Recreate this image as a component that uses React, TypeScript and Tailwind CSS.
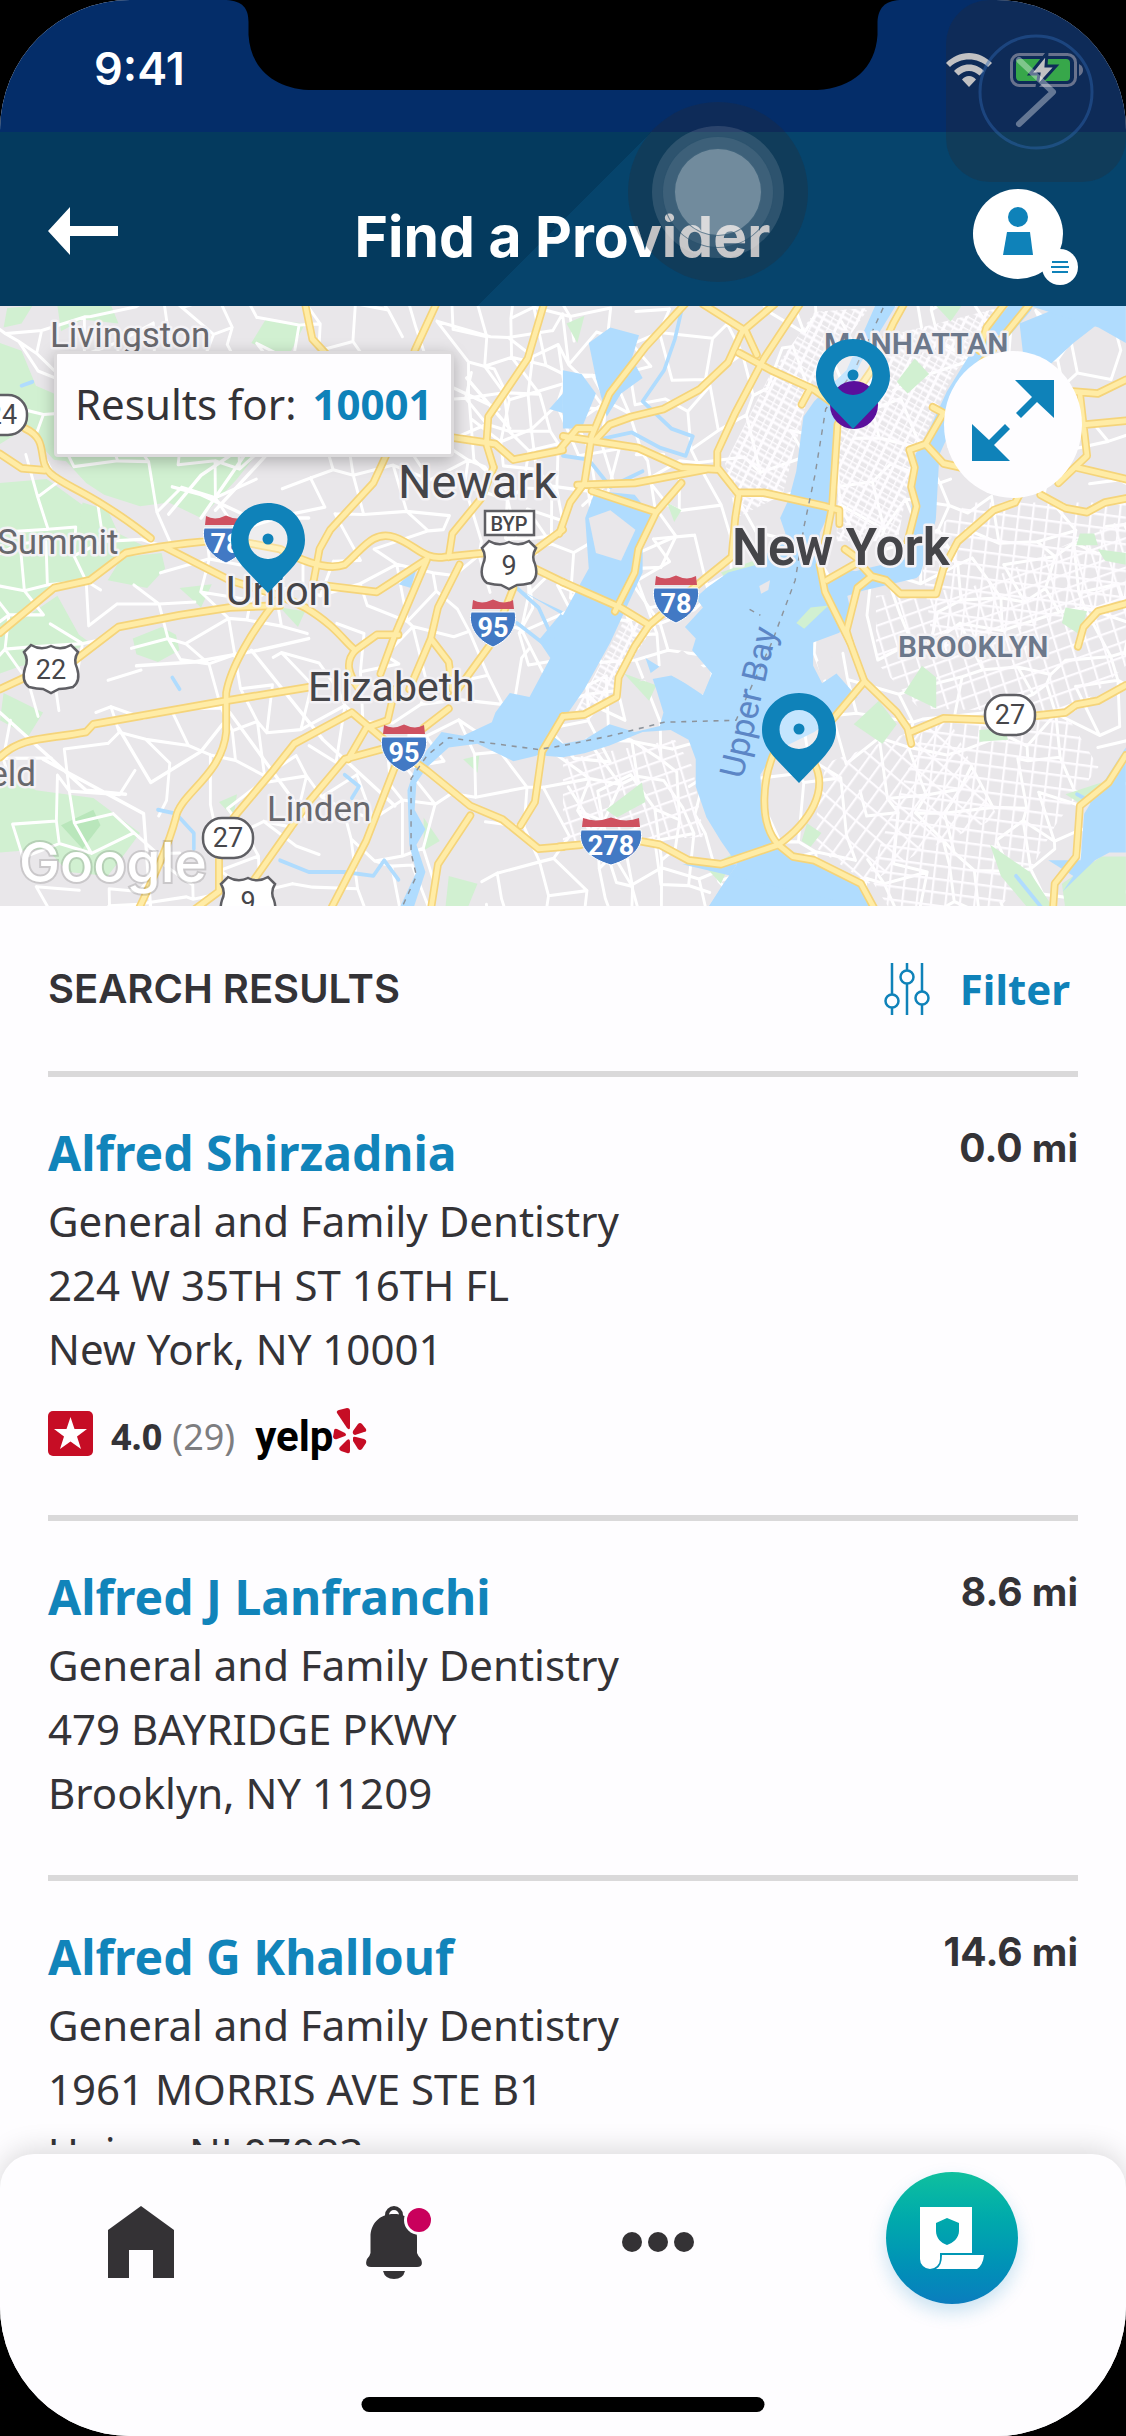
import React from "react";

/* ---------- Map data ---------- */

const roadsWest = [
  "M0 395L60 432L125 437",
  "M70 330C140 360 100 410 140 445S250 490 420 612",
  "M0 855L150 740L250 720L350 650C450 630 560 620 640 615L780 640C880 690 930 690 960 680C1010 640 1040 590 1100 610S1180 670 1240 660L1350 650L1480 650L1568 590",
  "M460 635L640 720L780 760L850 790C940 840 960 880 990 900C960 930 970 960 1000 1000",
  "M0 1000L70 970M210 925L330 840L500 810L640 790L780 785",
  "M780 760C700 850 640 950 630 1010L630 1110C620 1220 500 1270 490 1330C470 1400 430 1480 385 1568",
  "M0 1175C60 1120 130 1130 240 1110L260 1090L630 1030L860 995",
  "M850 10L870 100L910 140L1000 200M1080 390L1040 470L920 590L890 640L870 740M1215 10L1190 60L1155 130",
  "M1515 10L1470 150L1360 300L1355 370L1375 430M1200 345L1380 370L1430 410L1568 385",
  "M1375 430L1340 510L1260 600L1250 660M1490 690L1568 725",
  "M870 730L1050 750L1100 720L1190 665L1100 860L1060 960M1280 680L1220 790L1200 870L1140 1000M1200 870L1250 930L1260 1000M990 900L1050 860L1110 860",
  "M1430 740L1370 880L1260 1020M1250 1050L1180 1100M1120 1140L960 1180L860 1290L700 1500M1100 1000L1080 1080L1020 1100L970 1180",
  "M980 1060L820 1140L760 1210L660 1320L610 1380L610 1520L540 1568M980 1060L1070 1130L1190 1210L1310 1300L1400 1335L1500 1410L1568 1405",
  "M1100 1200L1020 1390L920 1568M1310 1325L1220 1450L1200 1568M1568 1070L1510 1160L1490 1290L1450 1350",
];

const roadsEast = [
  "M340 10L230 120L130 240L80 350L60 470L20 520L-10 600",
  "M660 10L560 150L480 290L430 390L430 430L490 500L480 560L470 660L390 720L240 835L160 790L0 725",
  "M590 10L500 80L460 160L380 230L280 280L190 300L130 320L90 360M390 10L510 80L540 140M490 135L580 180L700 230L760 270M665 268L690 225",
  "M-10 385L40 330L80 330M0 350L210 380L330 430L430 435M40 475L200 470L400 435M80 490L260 545L330 470M260 545L210 640L200 700L145 800",
  "M490 495L560 495L730 530L770 540L770 575",
  "M950 10L920 60L860 180L800 260L765 320L750 530L735 600L715 680L730 750L800 880L840 980",
  "M1230 10L1180 70L1160 130M1300 10L1230 90L1160 170M1030 275L1060 290L1010 370L965 385L980 430L970 480L985 530L960 620M1010 370L1060 420L1110 430",
  "M800 880L790 850L820 740L860 710L900 720L940 755L1040 755L1060 690L1100 620L1200 540L1260 520L1290 470M735 720L830 670L785 640M830 680L860 710",
  "M840 980L930 1060L960 1100L970 1140M970 1110L1060 1075L1200 1080L1400 1060L1430 1040L1490 1030L1568 990",
  "M840 980L740 1090L700 1190C740 1260 690 1340 600 1400C540 1340 560 1220 590 1160",
  "M-10 1405L50 1400M210 1390L270 1400L350 1440L440 1450L600 1400L640 1430L700 1440L830 1500L870 1568",
  "M0 1070L60 1065L150 1020L155 970L200 890L240 835",
  "M1568 205L1490 240L1420 235M1440 240L1460 400L1380 470M1568 310L1450 320M1430 430L1568 460M1330 500L1400 535L1460 545L1510 520L1568 510",
  "M1568 780L1490 800L1450 840L1435 890M1568 1170L1520 1240L1440 1300L1430 1430L1370 1500L1365 1568",
];

const parksWest = [
  "0,110 60,130 100,220 200,260 240,330 240,420 150,410 70,330 0,370",
  "20,20 90,15 60,60 10,70",
  "170,400 720,390 660,460 600,520 560,560 470,520 390,530 290,500 240,470",
  "0,470 130,460 280,560 330,600 420,640 330,670 240,720 150,740 0,850",
  "0,860 160,760 220,860 250,880 140,930 60,940 0,960",
  "230,520 300,540 330,600 300,620 220,580",
  "340,660 450,650 460,690 410,740 300,720",
  "370,870 450,840 490,860 500,900 440,930 380,910",
  "0,1200 100,1260 260,1280 390,1370 350,1420 300,1480 190,1470 130,1410 0,1420",
  "160,15 310,15 330,60 230,50 170,80",
  "740,50 850,60 800,150 700,110",
  "10,1010 120,1060 80,1120 0,1080",
  "1180,1330 1225,1390 1180,1415",
  "1250,1480 1330,1500 1300,1568 1240,1568",
  "780,790 850,800 830,840",
  "610,1290 660,1270 650,1330",
  "1090,210 1170,180 1160,250 1110,270",
  "1290,1180 1335,1170 1330,1215",
  "720,220 780,200 760,260",
  "500,740 590,730 560,790",
];

const parksEast = [
  "440,700 560,660 500,770",
  "170,960 260,990 240,1030",
  "100,850 135,840 110,890",
  "980,150 1020,190 960,240 930,210",
  "1000,940 1040,970 1040,1050 950,1010",
  "880,1030 930,1090 890,1140 810,1090",
  "680,1345 720,1370 690,1405 665,1390",
  "1400,790 1460,800 1440,860 1390,830",
  "1490,640 1568,650 1568,680 1510,670",
  "1190,1400 1300,1470 1370,1568 1300,1568 1220,1480",
  "1390,1500 1500,1430 1568,1430 1568,1568 1400,1568",
  "290,520 330,540 310,570",
  "10,60 60,40 40,110",
  "1040,15 1110,15 1080,55",
  "120,1310 220,1240 230,1290 150,1330",
  "400,1460 480,1420 440,1500",
  "1440,600 1480,600 1490,630 1430,630",
  "1160,1105 1230,1100 1240,1130 1160,1135",
  "1400,1270 1500,1240 1450,1300",
];

const waterShapes = [
  "M1440 740L1500 770L1568 800L1500 875L1533 920L1475 1020L1420 1010L1380 1060L1370 1085L1290 1120L1230 1110L1160 1190L1135 1260L1140 1400L1160 1470L1110 1568L1150 1568L1185 1470L1160 1400L1185 1360L1155 1310L1160 1240L1190 1200L1250 1150L1330 1140L1430 1185L1500 1170L1568 1175L1628 1165L1698 1145L1790 1110L1868 1105L1918 1130L1938 1180L1938 1250L1968 1330L2008 1390L2053 1450L2008 1510L1968 1568L2440 1568L2388 1490L2268 1440L2158 1400L2123 1320L2118 1220L2158 1160L2268 1110L2328 1070L2388 1020L2330 960L2290 985L2265 940L2265 880L2338 855L2370 800L2360 760L2398 700L2348 690L2308 740L2288 700L2283 600L2313 540L2328 380L2328 300L2398 160L2498 10L2440 10L2358 180L2268 260L2238 300L2218 440L2198 510L2173 560L2188 600L2108 680L2028 700L1968 740L1938 765L1958 790L1908 840L1938 870L1928 900L1983 960L1958 1015L1868 960L1798 920L1828 1000L1848 1060L1838 1095L1768 1110L1698 1090L1628 1130L1568 1140L1538 1120L1628 1000L1700 880L1740 800L1790 700L1790 620L1820 560L1768 500L1658 490L1630 560L1640 690L1568 810Z",
  "M1640 110L1700 70L1780 90L1760 150L1790 200L1730 240L1690 300L1660 200Z",
  "M1568 180L1620 190L1660 240L1620 330L1568 330Z",
  "M2840 60L2960 15L3060 60L2990 110L2920 170L2850 140Z",
  "M2870 15L3136 15L3136 110L3060 70Z",
  "M1568 240L1530 280L1568 290Z",
  "M3136 1150L3060 1260L3020 1320L3010 1440L2920 1440L2990 1480L2960 1520L3050 1440L3090 1420L3136 1420Z",
  "M1900 1450L2053 1450L1968 1568L2440 1568Z",
  "M1110 730L1160 690L1145 740Z",
];

const streams = [
  "M440 1310L490 1320L540 1370L540 1410",
  "M780 1440L860 1470L960 1470L1040 1480L1070 1440L1110 1490",
  "M960 1220L1000 1250L980 1280",
  "M60 220L90 210M480 970L500 1000",
  "M1440 740L1500 790L1540 870M1440 830L1510 880",
  "M1900 20L1880 100L1850 180L1790 260L1870 330L1930 350L1910 400L1840 380L1760 340L1660 360",
  "M1568 400L1640 410L1700 480L1790 440",
  "M3000 1270L3060 1300",
  "M2830 1480L2900 1560",
];

function makeRandom(seed: number) {
  let s = seed;
  return () => {
    s = (s * 16807) % 2147483647;
    return s / 2147483647;
  };
}

function streetNet(x0: number, y0: number, w: number, h: number, step: number, seed: number, keep: number) {
  const rand = makeRandom(seed);
  const cols = Math.ceil(w / step) + 1;
  const rows = Math.ceil(h / step) + 1;
  const pts: number[][][] = [];
  for (let r = 0; r < rows; r++) {
    pts.push([]);
    for (let c = 0; c < cols; c++) {
      pts[r].push([
        Math.round(x0 + c * step + r * step * 0.3 - h * 0.15 + (rand() - 0.5) * step * 0.9),
        Math.round(y0 + r * step - c * step * 0.12 + w * 0.06 + (rand() - 0.5) * step * 0.9),
      ]);
    }
  }
  let d = "";
  for (let r = 0; r < rows; r++) {
    for (let c = 0; c < cols; c++) {
      const [x, y] = pts[r][c];
      if (c + 1 < cols && rand() < keep) d += `M${x} ${y}L${pts[r][c + 1][0]} ${pts[r][c + 1][1]}`;
      if (r + 1 < rows && rand() < keep) d += `M${x} ${y}L${pts[r + 1][c][0]} ${pts[r + 1][c][1]}`;
    }
  }
  return d;
}

const streetsWest = streetNet(-60, -20, 1850, 1640, 84, 77, 0.66);
const streetsEast = streetNet(1500, -20, 1750, 1640, 84, 913, 0.6);

const pins = [
  { x: 268, y: 197 },
  { x: 853, y: 33 },
  { x: 799, y: 387 },
];

function Interstate({ x, y, label, wide }: { x: number; y: number; label: string; wide?: boolean }) {
  const w = wide ? 30 : 22;
  return (
    <g transform={`translate(${x} ${y})`}>
      <path
        d={`M${-w} -11H${w}C${w + 3} 4 ${w - 6} 17 0 24C${6 - w} 17 ${-w - 3} 4 ${-w} -11Z`}
        fill="#4279c4"
        stroke="#fff"
        strokeWidth="1"
      />
      <path d={`M${2 - w} -23Q${-w / 2} -18 0 -23.500Q${w / 2} -18 ${w - 2} -23L${w - 1} -14H${1 - w}Z`} fill="#cf5160" />
      <text y="14" textAnchor="middle" fontSize="27" fontWeight="700" fill="#fff">
        {label}
      </text>
    </g>
  );
}

function UsRoute({ x, y, label }: { x: number; y: number; label: string }) {
  return (
    <g transform={`translate(${x} ${y})`}>
      <path
        d="M-20 -24Q-10 -18 0 -23Q10 -18 20 -24L27 -17Q22 -9 26 -1Q30 12 22 18Q14 20 8 20L0 24L-8 20Q-14 20 -22 18Q-30 12 -26 -1Q-22 -9 -27 -17Z"
        fill="#fff"
        stroke="#5f5f64"
        strokeWidth="2.500"
      />
      <text y="10" textAnchor="middle" fontSize="27" fill="#46464a">
        {label}
      </text>
    </g>
  );
}

function StateRoute({ x, y, label }: { x: number; y: number; label: string }) {
  return (
    <g transform={`translate(${x} ${y})`}>
      <rect x="-25" y="-20" width="50" height="40" rx="19" fill="#fff" stroke="#5f5f64" strokeWidth="2.500" />
      <text y="9" textAnchor="middle" fontSize="27" fill="#46464a">
        {label}
      </text>
    </g>
  );
}

function ProviderMap() {
  return (
    <svg
      viewBox="0 0 1126 600"
      preserveAspectRatio="xMidYMid slice"
      className="block h-full w-full"
      fontFamily="Roboto, 'Liberation Sans', sans-serif"
      role="img"
      aria-label="Map of providers near New York"
    >
      <defs>
        <pattern id="manhattan" width="44" height="30" patternUnits="userSpaceOnUse" patternTransform="rotate(28)">
          <path d="M0 0H44M0 15H44M0 0V30M22 0V30" stroke="#fefcff" strokeWidth="8" fill="none" />
        </pattern>
        <pattern id="brooklyn" width="40" height="34" patternUnits="userSpaceOnUse" patternTransform="rotate(7)">
          <path d="M0 0H40M0 0V34" stroke="#fefcff" strokeWidth="12" fill="none" />
        </pattern>
        <pattern id="bayridge" width="36" height="52" patternUnits="userSpaceOnUse" patternTransform="rotate(38)">
          <path d="M0 0H36M0 0V52" stroke="#fefcff" strokeWidth="12" fill="none" />
        </pattern>
        <pattern id="queens" width="42" height="36" patternUnits="userSpaceOnUse" patternTransform="rotate(-18)">
          <path d="M0 0H42M0 0V36" stroke="#fefcff" strokeWidth="12" fill="none" />
        </pattern>
      </defs>
      <rect width="1126" height="600" fill="#e9e7ea" />
      <g transform="scale(0.359 0.389) translate(0 -15)" strokeLinejoin="round" strokeLinecap="round" fill="none">
        <g fill="#d1f0d1">
          {parksWest.map((p) => (
            <polygon key={p} points={p} />
          ))}
          <polygon points="170,1350 260,1310 280,1350 230,1410" fill="#b9e6bb" />
        </g>
        <path d={streetsWest} stroke="#fff" strokeWidth="8" />
        <path d={streetsEast} stroke="#fff" strokeWidth="8" />
        <path
          d="M470 550L560 450L640 400M560 560L680 400M600 540L740 400M480 480L560 500L700 560L860 560M700 900L900 1130L1100 1300M640 1060L860 1340M120 1180L400 1320L420 1568M0 1060L240 1260L350 1270M330 1100L420 1240L560 1160L620 1090M380 940L540 930L720 900L860 870M1300 200L1420 330M1250 220L1390 280"
          stroke="#fff"
          strokeWidth="9"
        />
        <polygon points="2340,310 2480,90 2780,20 2650,200 2540,420 2500,620 2330,620" fill="url(#manhattan)" />
        <polygon points="2020,420 2140,200 2270,30 2420,20 2250,250 2180,500 2050,560" fill="url(#manhattan)" />
        <polygon points="2440,760 2700,740 3136,560 3136,940 2990,1060 2560,1050 2440,930" fill="url(#queens)" />
        <polygon points="2300,1190 2480,1130 2640,1070 2780,1330 2560,1420 2420,1500 2260,1400" fill="url(#bayridge)" />
        <polygon points="2580,1080 2980,1080 3060,1200 2940,1350 2880,1450 2780,1568 2480,1568 2420,1480" fill="url(#brooklyn)" />
        <polygon points="2560,620 2700,520 3136,520 3136,780 2600,900" fill="url(#brooklyn)" />
        <polygon points="1568,1180 1880,1130 1930,1200 1960,1380 1568,1400" fill="url(#queens)" />
        <polygon points="1600,1060 1740,820 1820,840 1700,1010 1640,1080" fill="url(#manhattan)" />
        <g transform="translate(1568 0)" fill="#d1f0d1">
          {parksEast.map((p) => (
            <polygon key={p} points={p} />
          ))}
        </g>
        <g fill="#b0dcfe">
          {waterShapes.map((d) => (
            <path key={d} d={d} />
          ))}
        </g>
        <g stroke="#b0dcfe" strokeWidth="10">
          {streams.map((d) => (
            <path key={d} d={d} />
          ))}
        </g>
        <path d="M2850 10L2740 130L2660 250L2590 390L2580 560L2540 690L2400 720L2300 750" stroke="#b0dcfe" strokeWidth="54" />
        <path d="M2580 410L2570 560" stroke="#b0dcfe" strokeWidth="66" />
        <g fill="#e9e7ea">
          <polygon points="1640,560 1700,540 1770,590 1730,670 1660,650" />
          <polygon points="1780,980 1900,900 1980,960 1960,1010 1870,965" />
          <polygon points="2115,735 2145,720 2140,745 2120,755" />
          <polygon points="2275,930 2310,910 2340,945 2290,980" />
        </g>
        <polygon points="2218,830 2258,790 2308,785 2240,845" fill="#d1f0d1" />
        <g stroke="#f5d47a" strokeWidth="22">
          {roadsWest.map((d) => (
            <path key={d} d={d} />
          ))}
          <g transform="translate(1568 0)">
            {roadsEast.map((d) => (
              <path key={d} d={d} />
            ))}
          </g>
        </g>
        <g stroke="#ffeca6" strokeWidth="13">
          {roadsWest.map((d) => (
            <path key={d} d={d} />
          ))}
          <g transform="translate(1568 0)">
            {roadsEast.map((d) => (
              <path key={d} d={d} />
            ))}
          </g>
        </g>
        <path
          d="M2460 20L2380 180L2300 280L2270 450L2240 580L2215 720L2150 880L2050 1080L1850 1085L1700 1120L1568 1145L1500 1155L1250 1125L1190 1170L1145 1230L1145 1420L1160 1480L1120 1560M2088 795L2118 810"
          stroke="#8d949c"
          strokeWidth="4"
          strokeDasharray="14 16"
          strokeLinecap="butt"
        />
      </g>

      <g stroke="#f4f2f5" strokeWidth="5" strokeLinejoin="round" paintOrder="stroke" fill="#68686d">
        <g fontSize="35">
          <text x="50" y="41">Livingston</text>
          <text x="-3" y="248">Summit</text>
          <text x="267" y="515">Linden</text>
          <text x="36" y="480" textAnchor="end">eld</text>
        </g>
        <g fill="#454549">
          <text x="398" y="192" fontSize="47">Newark</text>
          <text x="226" y="299" fontSize="41">Union</text>
          <text x="308" y="395" fontSize="41">Elizabeth</text>
          <text x="732" y="259" fontSize="51" fontWeight="600">New York</text>
        </g>
        <g fill="#6c788b" fontSize="30" fontWeight="600">
          <text x="824" y="48">MANHATTAN</text>
          <text x="898" y="351">BROOKLYN</text>
        </g>
      </g>
      <text
        transform="translate(748 396) rotate(-77)"
        textAnchor="middle"
        dominantBaseline="central"
        fontSize="34"
        fill="#5c86c6"
      >
        Upper Bay
      </text>

      <Interstate x={226} y={233} label="78" />
      <Interstate x={493} y={317} label="95" />
      <Interstate x={404} y={442} label="95" />
      <Interstate x={676} y={293} label="78" />
      <Interstate x={611} y={535} label="278" wide />
      <rect x="485" y="205" width="49" height="24" fill="#fff" stroke="#5f5f64" strokeWidth="2.500" />
      <text x="509" y="225" textAnchor="middle" fontSize="20" fontWeight="500" fill="#46464a">
        BYP
      </text>
      <UsRoute x={51} y={363} label="22" />
      <UsRoute x={509} y={259} label="9" />
      <UsRoute x={248} y={595} label="9" />
      <StateRoute x={2} y={109} label="24" />
      <StateRoute x={228} y={532} label="27" />
      <StateRoute x={1010} y={409} label="27" />

      <text
        x="19"
        y="576"
        fontSize="55"
        fontWeight="500"
        fontFamily="Inter, sans-serif"
        fill="#fff"
        stroke="#00000022"
        strokeWidth="4"
        paintOrder="stroke"
      >
        Google
      </text>

      {pins.map((p) => (
        <circle key={p.x} cx={p.x} cy={p.y + 36} r="20" fill="#fff" fillOpacity="0.250" />
      ))}
      <circle cx="854" cy="99" r="24" fill="#5a109c" />
      {pins.map((p) => (
        <g key={p.x} transform={`translate(${p.x} ${p.y})`}>
          <path
            fillRule="evenodd"
            d="M0 0C21 0 37 16 37 37C37 49 31 57 23 66L0 90L-23 66C-31 57 -37 49 -37 37C-37 16 -21 0 0 0ZM0 17A19.500 19.500 0 1 0 0 56A19.500 19.500 0 1 0 0 17Z"
            fill="#0f82b9"
          />
          <circle cy="36" r="5.500" fill="#0f82b9" />
        </g>
      ))}
    </svg>
  );
}

/* ---------- Result list ---------- */

type Provider = {
  name: string;
  specialty: string;
  address: string[];
  distance: string;
  rating?: { score: string; count: number };
};

const providers: Provider[] = [
  {
    name: "Alfred Shirzadnia",
    specialty: "General and Family Dentistry",
    address: ["224 W 35TH ST 16TH FL", "New York, NY 10001"],
    distance: "0.0 mi",
    rating: { score: "4.0", count: 29 },
  },
  {
    name: "Alfred J Lanfranchi",
    specialty: "General and Family Dentistry",
    address: ["479 BAYRIDGE PKWY", "Brooklyn, NY 11209"],
    distance: "8.6 mi",
  },
  {
    name: "Alfred G Khallouf",
    specialty: "General and Family Dentistry",
    address: ["1961 MORRIS AVE STE B1", "Union, NJ 07083"],
    distance: "14.6 mi",
  },
];

function YelpRating({ score, count }: { score: string; count: number }) {
  return (
    <div className="mt-7 flex h-[56px] items-center text-[36px] leading-[56px]">
      <svg viewBox="0 0 45 45" className="mb-2 mr-[18px] size-[45px]" aria-hidden="true">
        <rect width="45" height="45" rx="5" fill="#c60d25" />
        <path d="M22.500 6L26.500 18H39L29 25.500L33 38L22.500 30.500L12 38L16 25.500L6 18H18.500Z" fill="#fff" />
      </svg>
      <strong className="mr-[10px] font-bold">{score}</strong>
      <span className="mr-5 text-[#7d7d80]">({count})</span>
      <span className="font-[Roboto,sans-serif] text-[42px] font-bold leading-[56px] text-black">yelp</span>
      <svg viewBox="0 0 34 46" className="mb-3 h-[46px] w-[34px]" fill="#c60d25" aria-hidden="true">
        <path d="M4 5Q3 3 6 2L14 0Q17 0 17 3V19Q17 23 14 20Z" />
        <path d="M20 23L25 16Q27 14 29 16L33 21Q34 24 31 24L22 27Q19 26 20 23Z" />
        <path d="M20 30Q20 28 23 29L31 31Q34 32 33 35L29 41Q27 43 25 41L20 33Z" />
        <path d="M14 32Q17 30 17 34V43Q17 46 14 45L8 43Q5 41 7 39Z" />
        <path d="M1 23Q1 20 4 21L12 25Q14 27 12 28L4 31Q1 32 0 29Z" />
      </svg>
    </div>
  );
}

function ProviderCard({ provider }: { provider: Provider }) {
  return (
    <li className="border-t-[6px] border-[#dad9da] pb-[50px] pt-11">
      <div className="flex items-start justify-between">
        <a href="#provider" className="text-[48px] font-bold leading-[64px] text-[#1184ba]">
          {provider.name}
        </a>
        <span className="font-[Inter,sans-serif] text-[39px] font-bold leading-[54px]">{provider.distance}</span>
      </div>
      <p className="mt-1 text-[42px] leading-[64px]">{provider.specialty}</p>
      {provider.address.map((line) => (
        <p key={line} className="text-[42px] leading-[64px]">
          {line}
        </p>
      ))}
      {provider.rating && <YelpRating score={provider.rating.score} count={provider.rating.count} />}
    </li>
  );
}

/* ---------- Chrome ---------- */

function StatusBar() {
  return (
    <div className="relative flex h-[132px] shrink-0 items-start justify-between bg-[#042d69] pl-[94px] pr-[42px] pt-[42px] text-white">
      <svg
        viewBox="0 0 673 90"
        className="absolute left-1/2 top-0 h-[90px] w-[673px] -translate-x-1/2"
        aria-hidden="true"
      >
        <path
          d="M0 0C16 1 22 8 22 22V35C24 68 47 88 82 90H591C626 88 649 68 651 35V22C652 8 658 1 673 0Z"
          fill="#000"
        />
      </svg>
      <span className="font-[Inter,sans-serif] text-[45px] font-semibold leading-[54px]">9:41</span>
      <div className="mt-[10px] flex items-center gap-[18px]">
        <svg viewBox="0 0 46 34" className="h-[34px] w-[46px]" aria-label="Wi-Fi">
          <path d="M23 0C32 0 40 4 46 10L42 14C37 9 30 6.500 23 6.500S9 9 4 14L0 10C6 4 14 0 23 0Z" fill="#fff" />
          <path d="M23 11.500C29 11.500 34 14 38 18L33.500 22.500C30.500 20 27 18 23 18S15.500 20 12.500 22.500L8 18C12 14 17 11.500 23 11.500Z" fill="#fff" />
          <path d="M23 23C26 23 28 24.500 30 26.500L23 34L16 26.500C18 24.500 20 23 23 23Z" fill="#fff" />
        </svg>
        <svg viewBox="0 0 74 36" className="h-9 w-[74px]" aria-label="Battery charging">
          <rect x="1.500" y="2.500" width="64" height="31" rx="8" fill="none" stroke="#8492b4" strokeWidth="3" />
          <rect x="6" y="7" width="54" height="22" rx="4" fill="#3ddb55" />
          <path d="M69 12Q73 14 73 18T69 24Z" fill="#8492b4" />
          <path d="M37 1L20 22H29L27 35L46 14H36Z" fill="#fff" stroke="#042d69" strokeWidth="3" />
        </svg>
      </div>
    </div>
  );
}

function Header() {
  return (
    <header className="flex h-[174px] shrink-0 items-center justify-between bg-[linear-gradient(135deg,#043a5e_461px,#06446c_461px)] pl-12 pr-12 pt-8">
      <button type="button" aria-label="Back" className="flex w-[104px] pb-2">
        <svg viewBox="0 0 70 48" className="h-12 w-[70px]" fill="#fff" aria-hidden="true">
          <path d="M0 24L22 0V19H70V29H22V48Z" />
        </svg>
      </button>
      <h1 className="pt-1 font-[Inter,sans-serif] text-[57px] font-bold leading-[70px] text-white">
        Find a Provider
      </h1>
      <button type="button" aria-label="Profile menu" className="mt-1 h-[96px] w-[105px]">
        <svg viewBox="0 0 105 96" className="h-[96px] w-[105px]" aria-hidden="true">
          <circle cx="45" cy="45" r="45" fill="#fff" />
          <circle cx="45" cy="28" r="10" fill="#0f82b9" />
          <path d="M34 43H57L60 66H30Z" fill="#0f82b9" />
          <circle cx="87" cy="78" r="18" fill="#fff" />
          <path d="M79 73H95M78 78H96M79 83H95" stroke="#0f82b9" strokeWidth="2" />
        </svg>
      </button>
    </header>
  );
}

function TouchOverlays() {
  return (
    <>
      <div className="pointer-events-none absolute right-0 top-0 h-[182px] w-[180px] rounded-[44px] bg-[rgba(40,40,48,0.290)]">
        <svg viewBox="0 0 180 182" className="h-full w-full" fill="none" aria-hidden="true">
          <circle cx="90" cy="92" r="56" stroke="#2f66b0" strokeOpacity="0.450" strokeWidth="3" />
          <path
            d="M73 60L107 92L73 124"
            stroke="#fff"
            strokeOpacity="0.360"
            strokeWidth="6"
            strokeLinecap="round"
            strokeLinejoin="round"
          />
        </svg>
      </div>
      <div className="pointer-events-none absolute left-[628px] top-[102px] flex size-[180px] items-center justify-center rounded-full bg-[rgba(40,40,48,0.290)]">
        <div className="flex size-[132px] items-center justify-center rounded-full bg-white/12">
          <div className="flex size-[112px] items-center justify-center rounded-full border border-[#1f4a66]/60 bg-white/8">
            <div className="size-[88px] rounded-full border border-[#1f4a66]/60 bg-white/27" />
          </div>
        </div>
      </div>
    </>
  );
}

function BottomNav() {
  return (
    <nav className="relative z-10 mt-[9px] h-[282px] shrink-0 rounded-t-[34px] bg-[#fefdff] shadow-[0_-4px_28px_rgba(0,0,0,0.150)]">
      <div className="flex items-center justify-between px-[108px] pt-[18px]">
        <button type="button" aria-label="Home" className="pt-2">
          <svg viewBox="0 0 66 72" className="h-[72px] w-[66px]" fill="#343235" aria-hidden="true">
            <path d="M33 0L66 24V72H45V44H21V72H0V24Z" />
          </svg>
        </button>
        <button type="button" aria-label="Notifications" className="pt-2">
          <svg viewBox="0 0 65 73" className="h-[73px] w-[65px]" aria-hidden="true">
            <path d="M21 12V9A7 7 0 0 1 35 9V12" fill="none" stroke="#343235" strokeWidth="4" />
            <path
              d="M28 8C13 8 4.500 18 4.500 31V47Q4 50 1 53Q-2 61 5 61H51Q58 61 55 53Q52 50 51 47V31C51 18 43 8 28 8Z"
              fill="#343235"
            />
            <path d="M17 65H39Q37 73 28 73T17 65Z" fill="#343235" />
            <circle cx="53" cy="14" r="15" fill="#fefdff" />
            <circle cx="53" cy="14" r="12" fill="#c9005c" />
          </svg>
        </button>
        <button type="button" aria-label="More" className="pt-2">
          <svg viewBox="0 0 72 20" className="h-5 w-[72px]" fill="#343235" aria-hidden="true">
            <circle cx="10" cy="10" r="10" />
            <circle cx="36" cy="10" r="10" />
            <circle cx="62" cy="10" r="10" />
          </svg>
        </button>
        <button
          type="button"
          aria-label="My plan"
          className="flex size-[132px] items-center justify-center rounded-full bg-linear-to-b from-[#10c09e] to-[#0b7dbe] shadow-[0_8px_18px_rgba(15,130,190,0.220)]"
        >
          <svg viewBox="0 0 64 63" className="h-[63px] w-16" fill="#fff" aria-hidden="true">
            <path
              fillRule="evenodd"
              d="M0 0H52V46H20V52A10 10 0 0 1 0 52ZM27 11L16 16V24C16 31 21 36 27 38C33 36 39 31 39 24V16Z"
            />
            <path d="M22 48H64Q63 58 57 62H16Q22 59 22 48Z" />
          </svg>
        </button>
      </div>
      <div className="absolute bottom-6 left-1/2 h-[15px] w-[403px] -translate-x-1/2 rounded-full bg-black" />
    </nav>
  );
}

export default function App() {
  return (
    <div className="h-screen bg-black">
      <div className="relative flex h-full flex-col overflow-hidden rounded-[130px] bg-[#fefdff] font-['Noto_Sans',sans-serif] text-[#343337]">
        <StatusBar />
        <Header />
        <main className="flex min-h-0 flex-1 flex-col">
          <section className="relative h-[600px] shrink-0 overflow-hidden">
            <ProviderMap />
            <div className="absolute left-[54px] top-[45px] flex items-center gap-4 rounded border-[3px] border-[#dcdadc] bg-[#fefdff] px-[18px] py-[22px] text-[42px] leading-[56px] shadow-[0_4px_16px_rgba(0,0,0,0.250)]">
              <span>Results for:</span>
              <strong className="font-bold text-[#0f82b9]">10001</strong>
            </div>
            <button
              type="button"
              aria-label="Expand map"
              className="absolute right-[44px] top-[45px] flex h-[147px] w-[138px] items-center justify-center rounded-[50%] bg-[#fefdff] pb-2"
            >
              <svg viewBox="0 0 82 82" className="size-[82px]" fill="#0f82b9" aria-hidden="true">
                <path d="M43 0H82V38L65 22L49 38L44 33L60 17Z" />
                <path d="M0 44L17 60L33 44L38 49L22 65L38 81H0Z" />
              </svg>
            </button>
          </section>
          <section className="min-h-0 flex-1 overflow-y-auto px-12 [scrollbar-width:none]">
            <div className="flex h-[165px] items-center justify-between pr-2">
              <h2 className="font-[Inter,sans-serif] text-[40px] font-semibold leading-[50px]">SEARCH RESULTS</h2>
              <button
                type="button"
                className="flex items-center gap-[30px] text-[42px] font-bold leading-[56px] text-[#0f82b9]"
              >
                <svg viewBox="0 0 46 52" className="h-[52px] w-[46px]" fill="none" stroke="#0f82b9" strokeWidth="2.500" aria-hidden="true">
                  <path d="M8 0V31M8 45V52M23 0V7M23 21V52M38 0V28M38 42V52" />
                  <circle cx="8" cy="38" r="6.500" />
                  <circle cx="23" cy="14" r="6.500" />
                  <circle cx="38" cy="35" r="6.500" />
                </svg>
                Filter
              </button>
            </div>
            <ul>
              {providers.map((p) => (
                <ProviderCard key={p.name} provider={p} />
              ))}
            </ul>
          </section>
        </main>
        <BottomNav />
        <TouchOverlays />
      </div>
    </div>
  );
}
